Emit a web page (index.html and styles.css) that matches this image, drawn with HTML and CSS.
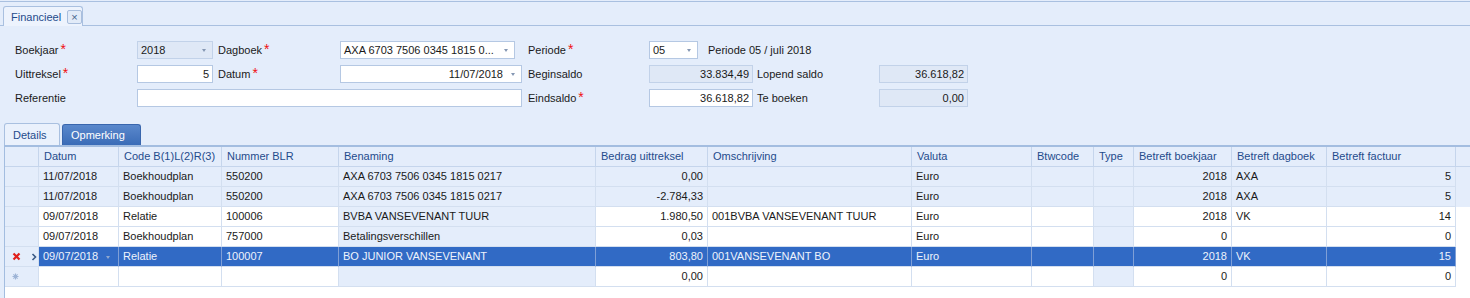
FILE: index.html
```html
<!DOCTYPE html>
<html lang="nl">

<head>
    <meta charset="UTF-8">
    <title>Financieel</title>
    <link rel="stylesheet" href="styles.css">
</head>

<body>
    <div class="page">
        <!-- documenttabs -->
        <div class="doc-tabs">
            <div class="doc-tab">
                <span>Financieel</span>
                <span class="close">×</span>
            </div>
        </div>

        <!-- kop van het uittreksel -->
        <div class="form">
            <div class="lbl">Boekjaar<span class="req">*</span></div>
            <div class="field combo disabled"><span class="val">2018</span><span class="arrow"></span></div>
            <div class="lbl l3">Dagboek<span class="req">*</span></div>
            <div class="field combo short"><span class="val">AXA 6703 7506 0345 1815 0...</span><span class="arrow"></span></div>
            <div class="lbl l5">Periode<span class="req">*</span></div>
            <div class="periode">
                <div class="field combo"><span class="val">05</span><span class="arrow"></span></div>
                <span class="periode-txt">Periode 05 / juli 2018</span>
            </div>

            <div class="lbl">Uittreksel<span class="req">*</span></div>
            <div class="field num"><span class="val">5</span></div>
            <div class="lbl l3">Datum<span class="req">*</span></div>
            <div class="field combo num"><span class="val">11/07/2018</span><span class="arrow"></span></div>
            <div class="lbl l5">Beginsaldo</div>
            <div class="field num disabled"><span class="val">33.834,49</span></div>
            <div class="lbl l7">Lopend saldo</div>
            <div class="field num disabled"><span class="val">36.618,82</span></div>

            <div class="lbl">Referentie</div>
            <div class="field wide"></div>
            <div class="lbl l5">Eindsaldo<span class="req">*</span></div>
            <div class="field num"><span class="val">36.618,82</span></div>
            <div class="lbl l7">Te boeken</div>
            <div class="field num disabled"><span class="val">0,00</span></div>
        </div>

        <div class="sub-tabs">
            <div class="sub-tab active">Details</div>
            <div class="sub-tab hot">Opmerking</div>
        </div>

        <div class="grid">
            <table>
                <colgroup>
                    <col style="width:34px">
                    <col style="width:80px">
                    <col style="width:103px">
                    <col style="width:117px">
                    <col style="width:257px">
                    <col style="width:112px">
                    <col style="width:204px">
                    <col style="width:120px">
                    <col style="width:62px">
                    <col style="width:40px">
                    <col style="width:98px">
                    <col style="width:95px">
                    <col style="width:129px">
                    <col>
                </colgroup>
                <thead>
                    <tr>
                        <th></th>
                        <th>Datum</th>
                        <th>Code B(1)L(2)R(3)</th>
                        <th>Nummer BLR</th>
                        <th>Benaming</th>
                        <th>Bedrag uittreksel</th>
                        <th>Omschrijving</th>
                        <th>Valuta</th>
                        <th>Btwcode</th>
                        <th>Type</th>
                        <th>Betreft boekjaar</th>
                        <th>Betreft dagboek</th>
                        <th>Betreft factuur</th>
                        <th class="filler"></th>
                    </tr>
                </thead>
                <tbody>
                    <tr class="ro">
                        <td class="ind"></td>
                        <td>11/07/2018</td>
                        <td>Boekhoudplan</td>
                        <td>550200</td>
                        <td>AXA 6703 7506 0345 1815 0217</td>
                        <td class="r">0,00</td>
                        <td></td>
                        <td>Euro</td>
                        <td></td>
                        <td></td>
                        <td class="r">2018</td>
                        <td>AXA</td>
                        <td class="r">5</td>
                        <td class="filler"></td>
                    </tr>
                    <tr class="ro">
                        <td class="ind"></td>
                        <td>11/07/2018</td>
                        <td>Boekhoudplan</td>
                        <td>550200</td>
                        <td>AXA 6703 7506 0345 1815 0217</td>
                        <td class="r">-2.784,33</td>
                        <td></td>
                        <td>Euro</td>
                        <td></td>
                        <td></td>
                        <td class="r">2018</td>
                        <td>AXA</td>
                        <td class="r">5</td>
                        <td class="filler"></td>
                    </tr>
                    <tr>
                        <td class="ind"></td>
                        <td>09/07/2018</td>
                        <td>Relatie</td>
                        <td>100006</td>
                        <td class="lock">BVBA VANSEVENANT TUUR</td>
                        <td class="r">1.980,50</td>
                        <td>001BVBA VANSEVENANT TUUR</td>
                        <td>Euro</td>
                        <td></td>
                        <td class="lock"></td>
                        <td class="r">2018</td>
                        <td>VK</td>
                        <td class="r">14</td>
                        <td class="filler"></td>
                    </tr>
                    <tr>
                        <td class="ind"></td>
                        <td>09/07/2018</td>
                        <td>Boekhoudplan</td>
                        <td>757000</td>
                        <td class="lock">Betalingsverschillen</td>
                        <td class="r">0,03</td>
                        <td></td>
                        <td>Euro</td>
                        <td></td>
                        <td class="lock"></td>
                        <td class="r">0</td>
                        <td></td>
                        <td class="r">0</td>
                        <td class="filler"></td>
                    </tr>
                    <tr class="sel">
                        <td class="ind">
                            <span class="ind-icons">
                                <svg width="9" height="9" viewBox="0 0 9 9"><path d="M1.5 1.5 L7.5 7.5 M7.5 1.5 L1.5 7.5" stroke="#e0201c" stroke-width="2.2" /></svg>
                                <svg width="6" height="8" viewBox="0 0 6 8"><path d="M1.5 1 L4.5 4 L1.5 7" fill="none" stroke="#3a5a86" stroke-width="1.6" /></svg>
                            </span>
                        </td>
                        <td class="focus"><span class="cell-combo">09/07/2018<span class="arrow light"></span></span></td>
                        <td>Relatie</td>
                        <td>100007</td>
                        <td>BO JUNIOR VANSEVENANT</td>
                        <td class="r">803,80</td>
                        <td>001VANSEVENANT BO</td>
                        <td>Euro</td>
                        <td></td>
                        <td></td>
                        <td class="r">2018</td>
                        <td>VK</td>
                        <td class="r">15</td>
                        <td class="filler"></td>
                    </tr>
                    <tr>
                        <td class="ind">
                            <svg class="new-row" width="7" height="7" viewBox="0 0 7 7"><path d="M3.5 0.5 V6.5 M0.5 3.5 H6.5 M1.4 1.4 L5.6 5.6 M5.6 1.4 L1.4 5.6" stroke="#9db4d6" stroke-width="1.1" /></svg>
                        </td>
                        <td></td>
                        <td></td>
                        <td></td>
                        <td class="lock"></td>
                        <td class="r">0,00</td>
                        <td></td>
                        <td></td>
                        <td></td>
                        <td class="lock"></td>
                        <td class="r">0</td>
                        <td></td>
                        <td class="r">0</td>
                        <td class="filler"></td>
                    </tr>
                </tbody>
            </table>
        </div>
    </div>
</body>

</html>
```

FILE: styles.css
```css
* {
    margin: 0;
    padding: 0;
    box-sizing: border-box;
}

body {
    background: #e4edfb;
    font: 11px "Liberation Sans", Arial, sans-serif;
    color: #1a1a1a;
}

.page {
    width: 1470px;
    height: 298px;
    overflow: hidden;
}

/* documenttabs bovenaan */
.doc-tabs {
    margin-top: 1px;
    height: 25px;
    border-top: 1px solid #a9c0e0;
    border-bottom: 1px solid #a9c0e0;
    padding-left: 3px;
    display: flex;
    align-items: flex-end;
}

.doc-tab {
    height: 20px;
    width: 80px;
    margin-bottom: -1px;
    background: #edf3fd;
    border: 1px solid #a9c0e0;
    border-bottom: none;
    border-radius: 3px 3px 0 0;
    display: flex;
    align-items: center;
    padding-left: 7px;
    color: #1f4b8c;
}

.doc-tab .close {
    margin-left: 6px;
    width: 15px;
    height: 14px;
    border: 1px solid #a9bedd;
    background: #e2ebf8;
    border-radius: 2px;
    font-size: 11px;
    line-height: 12px;
    text-align: center;
    color: #47648f;
}

/* formulier */
.form {
    display: grid;
    grid-template-columns: 122px 76px 127px 182px 127px 104px 126px 89px;
    grid-template-rows: 18px 18px 18px;
    row-gap: 6px;
    margin: 15px 0 0 15px;
}

.lbl {
    display: flex;
    align-items: center;
    color: #1a1a1a;
}

.lbl.l3 {
    padding-left: 5px;
}

.lbl.l5 {
    padding-left: 6px;
}

.lbl.l7 {
    padding-left: 4px;
}

.req {
    color: #f01010;
    font-size: 14px;
    line-height: 14px;
    margin-left: 2px;
    align-self: flex-start;
    margin-top: 1px;
}

.field {
    border: 1px solid #b5c8e3;
    background: #fff;
    display: flex;
    align-items: center;
    padding: 0 3px;
    overflow: hidden;
    white-space: nowrap;
}

.field .val {
    flex: 1;
}

.field.num .val {
    text-align: right;
}

.field.disabled {
    background: #dfe8f6;
    border-color: #c2d2e9;
}

.field.short {
    width: 175px;
}

.field.wide {
    grid-column: 2 / 5;
}

.arrow {
    width: 0;
    height: 0;
    border-left: 2.5px solid transparent;
    border-right: 2.5px solid transparent;
    border-top: 3px solid #8597b3;
    margin: 1px 3px 0 8px;
}

.arrow.light {
    border-top-color: #8fa7cf;
}

.periode {
    grid-column: 6 / 9;
    display: flex;
    align-items: center;
}

.periode .field {
    width: 49px;
    height: 18px;
}

.periode-txt {
    margin-left: 10px;
}

/* detail tabs */
.sub-tabs {
    margin-top: 16px;
    padding-left: 4px;
    height: 22px;
    display: flex;
    align-items: flex-end;
    gap: 2px;
}

.sub-tab {
    height: 22px;
    border: 1px solid #a9c0e0;
    border-bottom: none;
    border-radius: 3px 3px 0 0;
    display: flex;
    align-items: center;
    padding-left: 8px;
}

.sub-tab.active {
    width: 56px;
    background: #eaf1fc;
    color: #1f4b8c;
}

.sub-tab.hot {
    width: 79px;
    height: 21px;
    background: linear-gradient(#5a88cc, #3b6cb7);
    border-color: #3966ad;
    color: #fff;
}

/* raster */
.grid {
    margin-left: 4px;
    border-top: 2px solid #a3bde0;
    border-left: 1px solid #a3bde0;
    background: #fff;
    height: 200px;
}

.grid table {
    width: 100%;
    table-layout: fixed;
    border-collapse: separate;
    border-spacing: 0;
}

.grid th,
.grid td {
    line-height: 19px;
    white-space: nowrap;
    overflow: hidden;
    text-align: left;
    font-weight: normal;
    border-right: 1px solid #d3dff0;
    border-bottom: 1px solid #d3dff0;
}

.grid th {
    background: #e4edfb;
    color: #1f4b8c;
    padding: 0 5px;
    border-right-color: #c5d5ec;
    border-bottom-color: #c5d5ec;
}

.grid td {
    padding: 0 4px;
    background: #fff;
}

.grid td.r {
    text-align: right;
}

.grid tr.ro td,
.grid td.lock,
.grid td.ind {
    background: #e4edfb;
}

.grid td.ind {
    padding: 0;
}

.grid th.filler {
    border-right: none;
}

.grid td.filler {
    background: #fff;
    border: none;
}

.grid tr.sel td {
    background: #316ac5;
    color: #eef3fc;
    border-right-color: #7f9fd6;
    border-bottom-color: #d3dff0;
}

.grid tr.sel td.ind {
    background: #e4edfb;
    border-right-color: #d3dff0;
}

.grid tr.sel td.filler {
    background: #fff;
}

.ind-icons {
    display: flex;
    align-items: center;
    gap: 10px;
    padding-left: 7px;
    height: 19px;
}

.new-row {
    display: block;
    margin-left: 7px;
}

.cell-combo {
    display: flex;
    align-items: center;
}

.cell-combo .arrow {
    margin-left: 8px;
}
```
